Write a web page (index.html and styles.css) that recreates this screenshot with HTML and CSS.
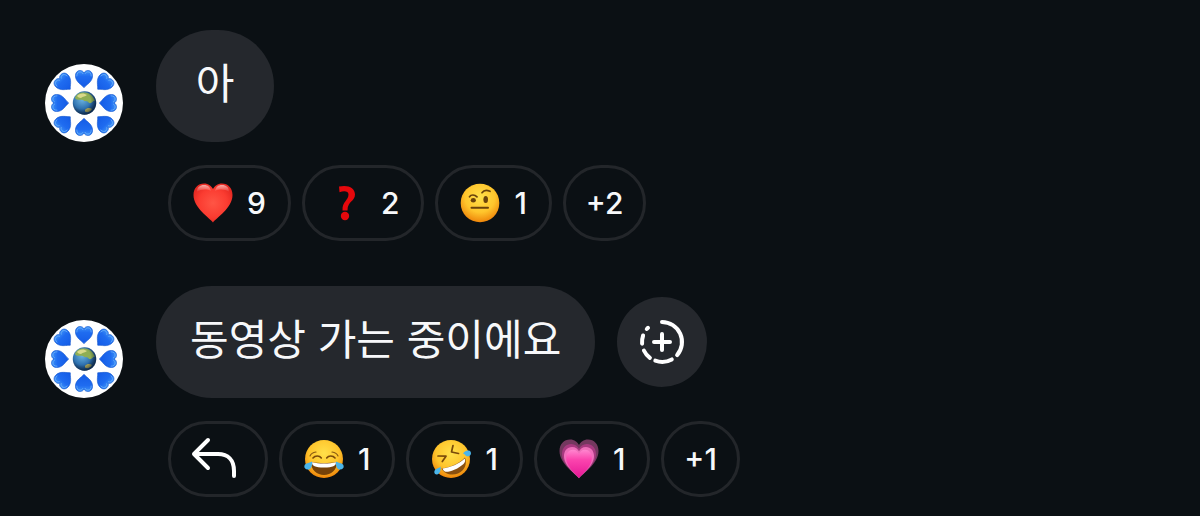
FILE: index.html
```html
<!DOCTYPE html>
<html lang="ko">
<head>
    <meta charset="UTF-8" />
    <meta name="viewport" content="width=device-width, initial-scale=1" />
    <title>Chat</title>
    <link rel="stylesheet" href="styles.css">
</head>
<body>
    <!-- Shared emoji and avatar artwork -->
    <svg class="sprite" width="0" height="0" aria-hidden="true">
        <defs>
            <radialGradient id="face-fill" cx="50%" cy="35%" r="65%">
                <stop offset="0" stop-color="#ffe04a" />
                <stop offset="0.6" stop-color="#ffc52c" />
                <stop offset="1" stop-color="#ee850a" />
            </radialGradient>
            <radialGradient id="red-fill" cx="50%" cy="50%" r="60%">
                <stop offset="0" stop-color="#ff5545" />
                <stop offset="0.6" stop-color="#fb3c31" />
                <stop offset="1" stop-color="#e0251f" />
            </radialGradient>
            <linearGradient id="shine" x1="0" y1="0" x2="0" y2="1">
                <stop offset="0" stop-color="#fff" stop-opacity="0.6" />
                <stop offset="1" stop-color="#fff" stop-opacity="0" />
            </linearGradient>
            <linearGradient id="pink-fill" x1="0" y1="0" x2="0" y2="1">
                <stop offset="0" stop-color="#ff86cf" />
                <stop offset="0.35" stop-color="#fb45ae" />
                <stop offset="1" stop-color="#e51795" />
            </linearGradient>
            <linearGradient id="blue-fill" x1="0" y1="0" x2="0" y2="1">
                <stop offset="0" stop-color="#3f93f8" />
                <stop offset="0.35" stop-color="#1f6cf0" />
                <stop offset="1" stop-color="#145be6" />
            </linearGradient>
            <radialGradient id="earth-fill" cx="40%" cy="35%" r="65%">
                <stop offset="0" stop-color="#6db4e0" />
                <stop offset="0.6" stop-color="#2f72b0" />
                <stop offset="1" stop-color="#1b4676" />
            </radialGradient>
            <radialGradient id="earth-shade" cx="40%" cy="40%" r="65%">
                <stop offset="0.55" stop-color="#06182f" stop-opacity="0" />
                <stop offset="1" stop-color="#06182f" stop-opacity="0.7" />
            </radialGradient>

            <path id="heart-shape" d="M20 39.500 C17 35 .500 25 .500 12 C.500 5 5 .500 11 .500 C15.500 .500 18.500 3 20 6 C21.500 3 24.500 .500 29 .500 C35 .500 39.500 5 39.500 12 C39.500 25 23 35 20 39.500 Z" />

            <symbol id="small-heart" viewBox="0 0 18 18">
                <path d="M9 17.700 C7 15 .400 12 .400 5.800 C.400 2.500 2.500 .500 5 .500 C7 .500 8.500 1.500 9 3 C9.500 1.500 11 .500 13 .500 C15.500 .500 17.600 2.500 17.600 5.800 C17.600 12 11 15 9 17.700 Z" fill="url(#blue-fill)" stroke="#1458cf" stroke-width=".6" />
                <path d="M1.800 6 C1.800 3.300 3.200 1.900 5 1.900 C6.500 1.900 7.400 2.600 7.900 3.600 M10.400 3.400 C11 2.500 11.800 1.900 13 1.900 C14.800 1.900 16.200 3.300 16.200 6" fill="none" stroke="#74b6f8" stroke-width=".7" stroke-linecap="round" />
            </symbol>

            <symbol id="avatar" viewBox="0 0 78 78">
                <circle cx="39" cy="39" r="39" fill="#fff" />
                <g>
                    <use href="#small-heart" x="30" y="6" width="18" height="18" />
                    <use href="#small-heart" x="30" y="6" width="18" height="18" transform="rotate(90 39 39)" />
                    <use href="#small-heart" x="30" y="6" width="18" height="18" transform="rotate(180 39 39)" />
                    <use href="#small-heart" x="30" y="6" width="18" height="18" transform="rotate(270 39 39)" />
                </g>
                <g>
                    <use href="#small-heart" x="30" y="2" width="18" height="18" transform="rotate(45 39 39)" />
                    <use href="#small-heart" x="30" y="2" width="18" height="18" transform="rotate(135 39 39)" />
                    <use href="#small-heart" x="30" y="2" width="18" height="18" transform="rotate(225 39 39)" />
                    <use href="#small-heart" x="30" y="2" width="18" height="18" transform="rotate(315 39 39)" />
                </g>
                <circle cx="39.500" cy="39" r="11.700" fill="url(#earth-fill)" />
                <path d="M30 34 C31 30 35 28 40 28.500 C45 29 48 32 50 37 C48 36 47 40 44 39 C42 36 40 38 38 36 C35 35 32 37 30 34 Z" fill="#8fae54" />
                <path d="M32 32 C34 29 39 28.500 42 31 C40 33 38 32 36 34 C34 34 33 33 32 32 Z" fill="#d9d98a" />
                <path d="M40 46 C42 43.500 45 43.500 47 45 C45.500 48 42 49 40 47.500 Z" fill="#b9b058" />
                <circle cx="39.500" cy="39" r="11.700" fill="url(#earth-shade)" />
            </symbol>

            <symbol id="red-heart" viewBox="0 0 40 40">
                <use href="#heart-shape" fill="url(#red-fill)" />
                <path d="M4 9 C4 4 7 2 11 2 C15 2 17 4 18 8 C14 6 8 6 4 9 Z M22 8 C23 4 25 2 29 2 C33 2 36 4 36 9 C32 6 26 6 22 8 Z" fill="url(#shine)" />
            </symbol>

            <symbol id="question" viewBox="0 0 40 40">
                <path d="M12 3.500 C21 1.500 28 4.500 28 11.500 C28 18.500 20.500 18 20.500 27.500 L15.500 27.500 C15 18.500 21.500 17.500 21.500 11.500 C21.500 8 17 7.300 12.500 9.300 Z" fill="#e6080c" />
                <circle cx="18" cy="33" r="4.200" fill="#e6080c" />
            </symbol>

            <symbol id="eyebrow" viewBox="0 0 40 40">
                <circle cx="20" cy="20" r="19.300" fill="url(#face-fill)" />
                <ellipse cx="13.300" cy="17.300" rx="2.600" ry="2.200" fill="#6b430b" />
                <ellipse cx="25.700" cy="16.500" rx="2.300" ry="3.600" fill="#6b430b" />
                <path d="M9.500 13.800 C11 11.500 14.500 11.300 17 13.800 M22 9.700 C23.500 7.500 26.500 6.600 30 8.300" fill="none" stroke="#6b430b" stroke-width="1.700" stroke-linecap="round" />
                <path d="M11.500 24.700 H28" stroke="#6b430b" stroke-width="2" stroke-linecap="round" />
            </symbol>

            <symbol id="joy" viewBox="0 0 40 40">
                <circle cx="20" cy="20" r="19" fill="url(#face-fill)" />
                <path d="M6 17 C7 14.500 9 13.500 12 13 M34 17 C33 14.500 31 13.500 28 13" fill="none" stroke="#8b5c12" stroke-width="1.200" stroke-linecap="round" />
                <path d="M9 19 C11 16.300 15.500 16.300 17.300 19 M22.700 19 C24.500 16.300 29 16.300 31 19" fill="none" stroke="#7a4a0a" stroke-width="1.600" stroke-linecap="round" />
                <path d="M7 23 C15 24.500 25 24.500 33 23 C33 31 27 36 20 36 C13 36 7 31 7 23 Z" fill="#764209" />
                <path d="M8 23.300 C15 25 25 25 32 23.300 C32 27 29 28.500 20 28.500 C11 28.500 8 27 8 23.300 Z" fill="#fff" />
                <path d="M8 22.500 C8.500 27 7 30.500 3.800 30.500 C.500 30.500 -.500 27.500 1 25.500 C2.500 23.700 6 24 8 22.500 Z M32 22.500 C31.500 27 33 30.500 36.200 30.500 C39.500 30.500 40.500 27.500 39 25.500 C37.500 23.700 34 24 32 22.500 Z" fill="#4bb5ea" />
            </symbol>

            <symbol id="rofl" viewBox="0 0 40 40">
                <circle cx="20" cy="20" r="19" fill="url(#face-fill)" />
                <path d="M7 17 L15 17.200 L11.300 22.500 M22 6.500 L20.500 13 L27.500 14.500" fill="none" stroke="#7a4a0a" stroke-width="1.700" stroke-linecap="round" stroke-linejoin="round" />
                <path d="M10.500 29.500 C19 28.500 28 25 34 18.500 C36.500 25 33.500 32 27 34.500 C20.500 37 13.500 35 10.500 29.500 Z" fill="#8a5010" />
                <path d="M11.500 29.600 C19.500 28.500 28 25 33.700 19.500 C34.500 22 34 23.500 32.500 25 C27.500 29.500 20 33 14.500 32.800 C13 32.200 12 31 11.500 29.600 Z" fill="#fff" />
                <path d="M32 14.500 C34 11.500 38.500 10.500 39.700 13 C40.800 15.500 38.500 18 36 17.300 C34.500 16.800 34 15 32 14.500 Z M9.500 27.500 C10 31 9 35 6 35.500 C3.500 35.800 2.500 33 4 31 C5.300 29.300 8 29.500 9.500 27.500 Z" fill="#4bb5ea" />
            </symbol>

            <symbol id="pink-heart" viewBox="0 0 40 40">
                <use href="#heart-shape" fill="#74385f" />
                <use href="#heart-shape" fill="#a83a80" transform="translate(2.600 4.500) scale(.87)" />
                <use href="#heart-shape" fill="#ee6fba" transform="translate(4.600 7.500) scale(.77 .8)" />
                <use href="#heart-shape" fill="url(#pink-fill)" transform="translate(6.800 10.500) scale(.66 .72)" />
            </symbol>
        </defs>
    </svg>

    <main class="chat">
        <article class="message">
            <div class="message-row">
                <svg class="avatar" role="img" aria-label="Profile picture"><use href="#avatar" /></svg>
                <p class="bubble">아</p>
            </div>
            <div class="reactions">
                <button class="reaction"><svg class="emoji" aria-hidden="true"><use href="#red-heart" /></svg>9</button>
                <button class="reaction"><svg class="emoji" aria-hidden="true"><use href="#question" /></svg>2</button>
                <button class="reaction"><svg class="emoji" aria-hidden="true"><use href="#eyebrow" /></svg>1</button>
                <button class="reaction more">+2</button>
            </div>
        </article>

        <article class="message">
            <div class="message-row">
                <svg class="avatar" role="img" aria-label="Profile picture"><use href="#avatar" /></svg>
                <p class="bubble">동영상 가는 중이에요</p>
                <button class="story-btn" aria-label="Add to story">
                    <svg class="line-icon" width="48" height="48" viewBox="0 0 48 48">
                        <path d="M24 4 A20 20 0 0 1 39.100 37.100 M33.800 41.400 A20 20 0 0 1 17.300 42.600 M11.900 39.900 A20 20 0 0 1 5.900 32.500 M4.100 25.700 A20 20 0 0 1 5.100 17.500 M8.800 11 A20 20 0 0 1 10 9.800" />
                        <path d="M24 16 V32 M16 24 H32" />
                    </svg>
                </button>
            </div>
            <div class="reactions">
                <button class="reaction" aria-label="Reply">
                    <svg class="line-icon" width="50" height="48" viewBox="0 0 50 48">
                        <path d="M15 5 L1 19 L15 33 M1 19 H25 C35 19 41 25 41 36 V41" />
                    </svg>
                </button>
                <button class="reaction"><svg class="emoji" aria-hidden="true"><use href="#joy" /></svg>1</button>
                <button class="reaction"><svg class="emoji" aria-hidden="true"><use href="#rofl" /></svg>1</button>
                <button class="reaction"><svg class="emoji" aria-hidden="true"><use href="#pink-heart" /></svg>1</button>
                <button class="reaction more">+1</button>
            </div>
        </article>
    </main>
</body>
</html>
```

FILE: styles.css
```css
* {
    box-sizing: border-box;
}
body {
    margin: 0;
    background: #0b1014;
    color: #f7f8fa;
    font-family: Inter, "Noto Sans CJK KR", sans-serif;
}
.sprite {
    position: absolute;
}
.chat {
    display: flex;
    flex-direction: column;
    gap: 45px;
    padding: 30px 45px 20px;
}
.message-row {
    display: flex;
    align-items: flex-end;
}
.avatar {
    flex: none;
    width: 78px;
    height: 78px;
    margin-right: 33px;
}
.bubble {
    min-width: 118px;
    margin: 0;
    padding: 21px 34px 31px;
    border-radius: 56px;
    background: #25282d;
    font-family: "Noto Sans CJK KR", sans-serif;
    font-size: 42px;
    font-weight: 400;
    line-height: 60px;
    text-align: center;
}
button {
    display: flex;
    align-items: center;
    justify-content: center;
    color: inherit;
    font-family: inherit;
    cursor: pointer;
}
.story-btn {
    align-self: center;
    width: 90px;
    height: 90px;
    margin-left: 22px;
    padding: 0;
    border: none;
    border-radius: 50%;
    background: #25282d;
}
.reactions {
    display: flex;
    flex-wrap: wrap;
    gap: 11px;
    margin: 23px 0 0 123px;
}
.reaction {
    gap: 14px;
    height: 76px;
    padding: 0 22px;
    border: 3px solid #23262a;
    border-radius: 38px;
    background: none;
    font-size: 30px;
    font-weight: 500;
}
.reaction.more {
    padding: 0 20px;
}
.reaction:hover {
    background: #171b20;
}
.emoji {
    width: 40px;
    height: 40px;
}
.line-icon {
    fill: none;
    stroke: #fff;
    stroke-width: 4;
    stroke-linecap: round;
    stroke-linejoin: round;
    overflow: visible;
}
```
